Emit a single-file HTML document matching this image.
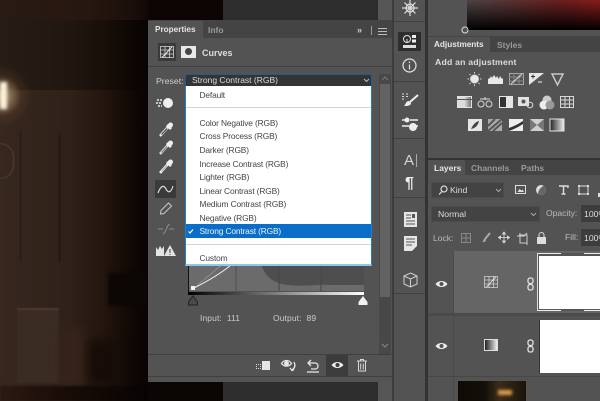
<!DOCTYPE html>
<html><head><meta charset="utf-8"><style>
html,body{margin:0;padding:0}
body{width:600px;height:401px;overflow:hidden;position:relative;background:#2e2e2e;font-family:"Liberation Sans",sans-serif;font-size:9px;color:#ddd}
div,span{position:absolute;white-space:nowrap;box-sizing:border-box}
svg{position:absolute;overflow:visible}
.t{line-height:12px;filter:blur(.3px)}
.m{left:199.500px;color:#444;font-size:8.4px;line-height:12px;letter-spacing:-.15px;filter:blur(.25px)}
</style></head><body>
<!-- photo -->
<div style="left:0;top:0;width:150px;height:401px;background:linear-gradient(90deg,#36271f 0,#302219 45%,#24170f 68%,#160c07 82%,#0c0603 92%,#080402 100%)"></div>
<div style="left:0;top:0;width:223px;height:20px;background:linear-gradient(90deg,#2a1a15,#26170f 40%,#1c100b 58%,#0d0605 70%,#0a0504)"></div>
<div style="left:0;top:20px;width:148px;height:70px;background:linear-gradient(90deg,rgba(14,7,4,.35),rgba(8,4,2,.45))"></div>
<div style="left:-30px;top:65px;width:62px;height:62px;background:radial-gradient(closest-side,rgba(255,220,170,.7),rgba(120,85,50,.22) 65%,transparent)"></div>
<div style="left:0;top:82px;width:7px;height:27px;background:#fbf2da;filter:blur(1.500px)"></div>
<div style="left:0;top:143px;width:14px;height:36px;border:1px solid #544438;border-left:0;border-radius:0 18px 18px 0;filter:blur(.5px)"></div>
<div style="left:20px;top:130px;width:1px;height:132px;background:#241811;filter:blur(.5px)"></div>
<div style="left:59px;top:135px;width:1px;height:127px;background:#1a100a;filter:blur(.5px)"></div>
<div style="left:17px;top:308px;width:42px;height:75px;background:#3a2c23;border-top:2px solid #4a392e;filter:blur(.6px)"></div>
<div style="left:60px;top:330px;width:25px;height:55px;background:#36241c;filter:blur(5px)"></div>
<div style="left:88px;top:340px;width:32px;height:45px;background:#170c07;filter:blur(5px)"></div>
<div style="left:108px;top:273px;width:40px;height:33px;background:#0c0605;filter:blur(1.500px)"></div>
<div style="left:0;top:386px;width:148px;height:15px;background:linear-gradient(90deg,#2a1911,#1a0d08 40%,#070303);filter:blur(1px)"></div>
<div style="left:148px;top:382px;width:75px;height:19px;background:#0b0504"></div>
<div style="left:148px;top:0;width:75px;height:20px;background:#0c0504"></div>
<div style="left:223px;top:0;width:155px;height:20px;background:#2d2d2d"></div>
<div style="left:378px;top:0;width:15px;height:401px;background:#565656"></div>

<!-- properties panel -->
<div style="left:148px;top:20px;width:244px;height:362px;background:#535353;border-top:1px solid #444"></div>
<div style="left:148px;top:21px;width:244px;height:17px;background:#444"></div>
<div style="left:148px;top:21px;width:55px;height:18px;background:#535353"></div>
<div class="t" style="left:155px;top:24px;color:#e4e4e4;font-weight:bold;font-size:8.2px">Properties</div>
<div class="t" style="left:208px;top:24px;color:#9a9a9a;font-weight:bold;font-size:8.5px">Info</div>
<div class="t" style="left:357px;top:24px;color:#ccc;font-weight:bold;font-size:9px">&#187;</div>
<div style="left:371px;top:26px;width:1px;height:9px;background:#999"></div>
<div style="left:378px;top:28px;width:9px;height:1px;background:#bbb;box-shadow:0 3px #bbb,0 6px #bbb"></div>
<div style="left:158px;top:43px;width:18px;height:18px;background:#3a3a3a"></div>
<svg style="left:160px;top:46px" width="14" height="12" fill="none" stroke="#cfcfcf" stroke-width=".8"><rect x=".5" y=".5" width="13" height="11"/><path d="M5 0v12M9.500 0v12M0 4h14M0 8h14"/><path d="M2 11C6 9 8 4 12 1" stroke="#eee" stroke-width="1"/></svg>
<div style="left:181px;top:46px;width:15px;height:12px;background:#e8e8e8"></div>
<div style="left:185px;top:48px;width:7px;height:7px;border-radius:50%;background:#444"></div>
<div class="t" style="left:202px;top:47px;color:#dedede;font-weight:bold;font-size:9px">Curves</div>
<div style="left:148px;top:66px;width:244px;height:1px;background:#404040"></div>
<div class="t" style="left:156px;top:75px;color:#cfcfcf;font-size:8.7px">Preset:</div>

<!-- left tools -->
<svg style="left:156px;top:96px" width="20" height="14"><circle cx="12" cy="7" r="5" fill="#eee"/><path d="M1 4h5M0 7h6M2 10h4" stroke="#eee" stroke-width="1.400" stroke-dasharray="2 1" fill="none"/></svg>
<svg style="left:159px;top:122px" width="15" height="15" fill="none"><path d="M1 14L9 5" stroke="#eee" stroke-width="2.500"/><path d="M2.500 12.500L8 6.500" stroke="#333" stroke-width="1"/><path d="M8 3l4 4" stroke="#eee" stroke-width="3"/><circle cx="11.500" cy="3" r="2.500" fill="#eee"/></svg>
<svg style="left:159px;top:140px" width="15" height="15" fill="none"><path d="M1 14L9 5" stroke="#ddd" stroke-width="2.500"/><path d="M2.500 12.500L8 6.500" stroke="#777" stroke-width="1"/><path d="M8 3l4 4" stroke="#eee" stroke-width="3"/><circle cx="11.500" cy="3" r="2.500" fill="#eee"/></svg>
<svg style="left:159px;top:159px" width="15" height="15" fill="none"><path d="M1 14L9 5" stroke="#eee" stroke-width="2.500"/><path d="M2.500 12.500L8 6.500" stroke="#aaa" stroke-width="1"/><path d="M8 3l4 4" stroke="#eee" stroke-width="3"/><circle cx="11.500" cy="3" r="2.500" fill="#eee"/></svg>
<div style="left:155px;top:180px;width:21px;height:18px;background:#3a3a3a"></div>
<svg style="left:157px;top:183px" width="17" height="12" fill="none"><path d="M1 10C4 2 7 2 9 6s5 4 7-3" stroke="#d8d8d8" stroke-width="1.200"/></svg>
<svg style="left:159px;top:201px" width="14" height="14" fill="none" stroke="#c8c8c8"><path d="M2 9.500L9.500 2l3 3L5 12.500 1.500 13z"/></svg>
<svg style="left:157px;top:222px" width="18" height="14" fill="none" stroke="#8c8c8c"><path d="M1 7h5M12 7h5M6 12C10 10 9 3 13 2"/></svg>
<svg style="left:156px;top:244px" width="20" height="13"><path d="M0 12V3l2 3 2-4 2 3 2-3v10z" fill="#e4e4e4"/><path d="M14 1l6 11H8z" fill="#e4e4e4"/><path d="M14 5v4M14 10v1" stroke="#444"/></svg>

<!-- curve graph -->
<div style="left:188px;top:258px;width:176px;height:33px;background:#6b6b6b"></div>
<svg style="left:188px;top:258px" width="176" height="33"><path d="M48 0V33M91 0V33M133 0V33" stroke="#4f4f4f" fill="none"/><path d="M73 6C78 22 90 26 100 27c15 2 30-1 42 0l34 0V0H73z" fill="#4e4e4e"/><path d="M91 0V33M133 0V33" stroke="#454545" fill="none"/><path d="M6 30L42 0" stroke="#8e8e8e" fill="none"/><path d="M6 30C18 24 32 16 43 7" stroke="#f0f0f0" fill="none" stroke-width="1"/><rect x="3" y="28" width="4" height="4" fill="#f2f2f2"/></svg>
<div style="left:188px;top:258px;width:1px;height:36px;background:#111"></div>
<div style="left:188px;top:292px;width:176px;height:3px;background:linear-gradient(90deg,#000,#fff)"></div>
<svg style="left:187px;top:295px" width="12" height="11"><path d="M6 1L10.500 7v3h-9V7z" fill="#4a4a4a" stroke="#222"/></svg>
<svg style="left:357px;top:295px" width="12" height="11"><path d="M6 1L10.500 7v3h-9V7z" fill="#f2f2f2"/></svg>
<div class="t" style="left:200px;top:312px;color:#cbcbcb;font-size:8.5px;word-spacing:2.500px;letter-spacing:.1px">Input: 111</div>
<div class="t" style="left:273px;top:312px;color:#cbcbcb;font-size:8.5px;word-spacing:2.500px;letter-spacing:.1px">Output: 89</div>

<!-- scrollbar -->
<div style="left:379px;top:74px;width:12px;height:280px;background:#484848"></div>
<div style="left:380px;top:84px;width:10px;height:213px;background:#626262"></div>
<svg style="left:381px;top:76px" width="8" height="5" fill="none" stroke="#777"><path d="M1 4l3-3 3 3"/></svg>
<svg style="left:381px;top:343px" width="8" height="5" fill="none" stroke="#888"><path d="M1 1l3 3 3-3"/></svg>

<!-- bottom toolbar -->
<div style="left:148px;top:354px;width:244px;height:1px;background:#3f3f3f"></div>
<div style="left:148px;top:376px;width:244px;height:1px;background:#3f3f3f"></div>
<div style="left:326px;top:355px;width:22px;height:21px;background:#3c3c3c"></div>
<div style="left:262px;top:361px;width:8px;height:9px;background:#e6e6e6"></div>
<div style="left:256px;top:364px;width:5px;height:5px;border:1px dotted #ddd"></div>
<svg style="left:280px;top:358px" width="18" height="15" fill="none" stroke="#e6e6e6" stroke-width="1.300"><path d="M1.500 5.500C4 1.500 9 1.500 11.500 5.500 9 9 4 9 1.500 5.500z"/><circle cx="6.500" cy="5.500" r="1.800" fill="#e6e6e6"/><path d="M14 4c1.500 3 1 6-2 8M10 10l2 2.500 2-1"/></svg>
<svg style="left:306px;top:359px" width="14" height="14" fill="none" stroke="#e6e6e6" stroke-width="1.300"><path d="M3 4h6c2 0 3 1.500 3 3s-1 3-3 3H5M5 1L2 4l3 3"/><path d="M1 13h12"/></svg>
<svg style="left:331px;top:360px" width="13" height="10"><path d="M.5 5C3.500 1 9.500 1 12.500 5 9.500 9 3.500 9 .5 5z" fill="#eee"/><circle cx="6.500" cy="5" r="2" fill="#3c3c3c"/></svg>
<svg style="left:357px;top:359px" width="11" height="13" fill="none" stroke="#d8d8d8"><path d="M0 2h10M3.500 2V.5h3V2M1.500 2.500v9.500h7V2.500M3.700 4.500v6M6.300 4.500v6"/></svg>

<!-- dropdown -->
<div style="left:185px;top:85px;width:187px;height:181px;background:#fff;border:1px solid #1f7fd0;border-top:0;border-bottom:2px solid #8fc8e8"></div>
<div style="left:185px;top:74px;width:187px;height:12px;background:#343434;border:1px solid #1d5c96;border-bottom:0"></div>
<div class="t" style="left:192px;top:74px;color:#ddd;font-size:8.5px">Strong Contrast (RGB)</div>
<svg style="left:363px;top:78px" width="7" height="5" fill="none" stroke="#bbb"><path d="M1 1l2.500 2.500L6 1"/></svg>
<div class="m" style="top:89px">Default</div>
<div style="left:186px;top:107px;width:185px;height:1px;background:#d4d4d4"></div>
<div class="m" style="top:117px">Color Negative (RGB)</div>
<div class="m" style="top:130px">Cross Process (RGB)</div>
<div class="m" style="top:144px">Darker (RGB)</div>
<div class="m" style="top:158px">Increase Contrast (RGB)</div>
<div class="m" style="top:171px">Lighter (RGB)</div>
<div class="m" style="top:185px">Linear Contrast (RGB)</div>
<div class="m" style="top:198px">Medium Contrast (RGB)</div>
<div class="m" style="top:212px">Negative (RGB)</div>
<div style="left:186px;top:224px;width:185px;height:14px;background:#0a6ec9"></div>
<div class="m" style="top:225px;color:#e8f2fb">Strong Contrast (RGB)</div>
<svg style="left:188px;top:229px" width="6" height="5" fill="none" stroke="#fff" stroke-width="1.200"><path d="M.5 2.500L2 4 5 .5"/></svg>
<div style="left:186px;top:244px;width:185px;height:1px;background:#d4d4d4"></div>
<div class="m" style="top:252px">Custom</div>

<!-- dock column -->
<div style="left:392px;top:0;width:2px;height:401px;background:#3c3c3c"></div>
<div style="left:394px;top:0;width:31px;height:401px;background:#535353"></div>
<div style="left:425px;top:0;width:3px;height:401px;background:#333"></div>
<div style="left:394px;top:21px;width:31px;height:1px;background:#3f3f3f"></div>
<div style="left:394px;top:81px;width:31px;height:1px;background:#3f3f3f"></div>
<div style="left:394px;top:138px;width:31px;height:1px;background:#3f3f3f"></div>
<div style="left:394px;top:197px;width:31px;height:1px;background:#3f3f3f"></div>
<div style="left:394px;top:293px;width:31px;height:1px;background:#3f3f3f"></div>
<svg style="left:402px;top:0" width="16" height="16" fill="none" stroke="#ddd" stroke-width="1.200"><circle cx="8" cy="8" r="4"/><path d="M8 0v16M0 8h16M2.500 2.500l11 11M13.500 2.500l-11 11"/></svg>
<div style="left:398px;top:32px;width:23px;height:19px;background:#2e2e2e"></div>
<svg style="left:402px;top:34px" width="15" height="15"><circle cx="5" cy="5" r="3.500" fill="none" stroke="#e4e4e4"/><path d="M5 5v4" stroke="#e4e4e4"/><rect x="10" y="1" width="4" height="3" fill="#eee"/><rect x="10" y="5.500" width="4" height="3" fill="#eee"/><rect x="1" y="11" width="13" height="3" fill="#ddd"/></svg>
<svg style="left:402px;top:58px" width="15" height="15" fill="none" stroke="#e2e2e2" stroke-width="1.200"><circle cx="7.500" cy="7.500" r="6.500"/><path d="M7.500 6.500v5M7.500 3.500v1.500"/></svg>
<svg style="left:401px;top:93px" width="18" height="14"><path d="M1 1h2M1 3.500h2M1 6h2M5 1h2M5 3.500h2" stroke="#ddd"/><path d="M17 2L9 9" stroke="#eee" stroke-width="2"/><path d="M8 8c-3 0-3 3-5 5 3 0 7 0 7-3z" fill="#eee"/></svg>
<svg style="left:401px;top:117px" width="18" height="16"><path d="M1 3h5M9 3h8M1 9h7M14 9h3" stroke="#eee" stroke-width="1.500"/><circle cx="6" cy="3" r="2.500" fill="#eee"/><circle cx="12" cy="10" r="4" fill="#eee"/></svg>
<div class="t" style="left:404px;top:153px;font-size:15px;line-height:15px;color:#d4d4d4">A</div>
<div style="left:416px;top:154px;width:1px;height:13px;background:#aaa"></div>
<div class="t" style="left:405px;top:176px;font-size:16px;line-height:15px;font-weight:bold;color:#eee">&#182;</div>
<svg style="left:404px;top:212px" width="13" height="15"><rect width="13" height="15" fill="#e6e6e6"/><path d="M2 3h5M2 6h5M2 9h9M2 12h9" stroke="#555"/><rect x="8" y="2" width="3" height="4" fill="#555"/></svg>
<svg style="left:404px;top:236px" width="13" height="15"><path d="M0 0h13v10l-5 5H0z" fill="#e6e6e6"/><path d="M2 3h9M2 6h9M2 9h6" stroke="#555"/></svg>
<svg style="left:403px;top:272px" width="15" height="16" fill="none" stroke="#cfcfcf"><path d="M7.500 1L14 4v8l-6.500 3L1 12V4zM1 4l6.500 3L14 4M7.500 7v8"/></svg>

<!-- right column -->
<div style="left:428px;top:0;width:172px;height:401px;background:#535353"></div>
<div style="left:467px;top:0;width:133px;height:30px;background:linear-gradient(180deg,rgba(0,0,0,0),#000),linear-gradient(90deg,#4c4444,#6a1f1f 70%,#8a1c1c)"></div>
<svg style="left:462px;top:25px" width="8" height="6" fill="none" stroke="#ddd"><circle cx="3" cy="5" r="3"/></svg>

<div style="left:428px;top:36px;width:172px;height:16px;background:#444"></div>
<div style="left:428px;top:37px;width:62px;height:15px;background:#535353"></div>
<div class="t" style="left:434px;top:39px;color:#e6e6e6;font-weight:bold;font-size:8.2px">Adjustments</div>
<div class="t" style="left:497px;top:39px;color:#999;font-weight:bold;font-size:8.5px">Styles</div>
<div class="t" style="left:435px;top:56px;color:#dcdcdc;font-weight:bold;font-size:8.7px;letter-spacing:.2px">Add an adjustment</div>
<!-- adjust icons row 1 -->
<svg style="left:467px;top:72px" width="100" height="15" fill="none" stroke="#d8d8d8"><circle cx="7.500" cy="7" r="4" fill="#e8e8e8"/><path d="M7.500 0v1.500M7.500 12.500V14M.5 7H2M13 7h1.500M2.500 2l1 1M11.500 11l1 1M12.500 2l-1 1M3.500 11l-1 1"/><path d="M21 12V7l2-1 1-2 1 2 2-3 2 3 1-2 2 3 1-3 2 3 1-1v6z" fill="#e8e8e8" stroke="none"/><rect x="42.500" y="1.500" width="14" height="11" stroke="#aaa"/><path d="M47 1v12M52 1v12M42 5h15M42 9h15" stroke="#888"/><path d="M44 12L55 2" stroke="#ddd"/><rect x="62" y="1" width="15" height="12" fill="#e6e6e6" stroke="none"/><path d="M62 13L77 1V13z" fill="#555" stroke="none"/><path d="M64 4.500h4M66 2.500v4" stroke="#333"/><path d="M71 10h4" stroke="#eee"/><path d="M85 2h11l-5.500 11z" stroke="#c8c8c8" stroke-width="1.500"/></svg>
<!-- row 2 -->
<div style="left:457px;top:96px;width:15px;height:12px;background:linear-gradient(90deg,#ddd 50%,#777);border:1px solid #e4e4e4"></div>
<div style="left:457px;top:99px;width:15px;height:1px;background:#555"></div>
<svg style="left:477px;top:96px" width="16" height="12" fill="none" stroke="#d8d8d8"><path d="M8 1v3M3 3h10"/><circle cx="4" cy="8" r="3"/><circle cx="12" cy="8" r="3"/></svg>
<div style="left:499px;top:96px;width:14px;height:12px;background:linear-gradient(90deg,#333 50%,#e6e6e6 50%);border:1px solid #e6e6e6"></div>
<svg style="left:518px;top:95px" width="16" height="14"><rect x="0" y="2" width="11" height="9" fill="#e2e2e2"/><circle cx="5.500" cy="6.500" r="2" fill="#555"/><circle cx="12" cy="10" r="2.800" fill="none" stroke="#d8d8d8"/></svg>
<svg style="left:539px;top:95px" width="16" height="15"><circle cx="8" cy="5" r="4.500" fill="#ccc"/><circle cx="5" cy="10" r="4.500" fill="#eee"/><circle cx="11" cy="10" r="4.500" fill="#999"/></svg>
<svg style="left:560px;top:96px" width="14" height="12" fill="none" stroke="#d8d8d8"><rect x=".5" y=".5" width="13" height="11"/><path d="M5 0v12M9.500 0v12M0 4h14M0 8h14"/></svg>
<!-- row 3 -->
<svg style="left:468px;top:119px" width="112" height="13"><rect width="14" height="12" fill="#e6e6e6"/><path d="M3 10C5 6 7 3 11 2 10 6 8 9 3 10z" fill="#444"/><rect x="20" width="14" height="12" fill="#aaa"/><path d="M20 12L34 0M25 12L34 4M20 7L27 0" stroke="#555" stroke-width="2"/><rect x="41" width="14" height="12" fill="#eee"/><path d="M41 9L46 7L50 5L55 2V5L50 8L46 10L41 12z" fill="#333"/><rect x="62" width="14" height="12" fill="#d0d0d0"/><path d="M62 0L69 6L76 0V12L69 6L62 12z" fill="#777"/><defs><linearGradient id="g"><stop offset="0" stop-color="#222"/><stop offset="1" stop-color="#eee"/></linearGradient></defs><rect x="82" width="14" height="12" fill="url(#g)" stroke="#e4e4e4"/></svg>

<!-- layers -->
<div style="left:428px;top:158px;width:172px;height:2px;background:#333"></div>
<div style="left:428px;top:160px;width:172px;height:15px;background:#444"></div>
<div style="left:428px;top:160px;width:37px;height:15px;background:#535353"></div>
<div class="t" style="left:434px;top:162px;color:#e6e6e6;font-weight:bold;font-size:8.5px">Layers</div>
<div class="t" style="left:471px;top:162px;color:#999;font-weight:bold;font-size:8.5px">Channels</div>
<div class="t" style="left:521px;top:162px;color:#999;font-weight:bold;font-size:8.5px">Paths</div>
<div style="left:431px;top:182px;width:73px;height:16px;background:#434343;border:1px solid #4b4b4b"></div>
<svg style="left:438px;top:185px" width="10" height="10" fill="none" stroke="#ddd" stroke-width="1.200"><circle cx="6" cy="4" r="3"/><path d="M4 6.500L1 9.500"/></svg>
<div class="t" style="left:450px;top:184px;color:#ddd;font-size:8.7px">Kind</div>
<svg style="left:495px;top:188px" width="7" height="5" fill="none" stroke="#aaa"><path d="M1 1l2.500 2.500L6 1"/></svg>
<svg style="left:515px;top:184px" width="85" height="13"><rect x=".5" y="1.500" width="10" height="8" fill="none" stroke="#ddd"/><path d="M2.500 8l2-3 2 1.500 1-1 1.500 2.500z" fill="#ddd"/><circle cx="26" cy="6" r="5" fill="#ddd"/><path d="M26 1a5 5 0 0 1 0 10 c-2-2 -2-8 0-10z" fill="#666" transform="rotate(35 26 6)"/><path d="M44 2h9v2M48.500 2v8M46.500 10h4" stroke="#ddd" stroke-width="1.400" fill="none"/><rect x="64" y="2" width="9" height="8" fill="none" stroke="#ddd"/><rect x="63" y="1" width="2" height="2" fill="#ddd"/><rect x="72" y="1" width="2" height="2" fill="#ddd"/><rect x="63" y="9" width="2" height="2" fill="#ddd"/><rect x="72" y="9" width="2" height="2" fill="#ddd"/><path d="M84 9v4" stroke="#ddd" stroke-width="2"/></svg>
<div style="left:431px;top:206px;width:109px;height:16px;background:#434343;border:1px solid #4b4b4b"></div>
<div class="t" style="left:438px;top:208px;color:#ddd;font-size:8.7px">Normal</div>
<svg style="left:530px;top:212px" width="7" height="5" fill="none" stroke="#aaa"><path d="M1 1l2.500 2.500L6 1"/></svg>
<div class="t" style="left:546px;top:207px;color:#bbb;font-size:8.5px">Opacity:</div>
<div style="left:581px;top:205px;width:19px;height:17px;background:#3d3d3d"></div>
<div class="t" style="left:584px;top:208px;color:#ddd;font-size:8.7px">100%</div>
<div class="t" style="left:433px;top:232px;color:#bbb;font-size:8.5px">Lock:</div>
<svg style="left:460px;top:232px" width="110" height="14"><rect x="1.500" y="1.500" width="9" height="9" fill="none" stroke="#888"/><path d="M1.500 6h9M6 1.500v9" stroke="#888"/><path d="M30 1L25 7" stroke="#aaa" stroke-width="2"/><path d="M25 6c-2 1-1 3-3 4 2 0 4 0 4-2z" fill="#aaa"/><path d="M44 0v11M38.500 5.500h11M44 0l-1.500 2h3zM44 11l-1.500-2h3zM38.500 5.500l2-1.500v3zM49.500 5.500l-2-1.500v3z" stroke="#ddd" fill="#ddd" stroke-width=".8"/><path d="M59 3h8v8h-7V1M57 4h8M67 1l-2 2M67 13v-2" stroke="#ccc" fill="none"/><rect x="77" y="5" width="9" height="7" fill="#ddd"/><path d="M79 5V3a2.500 2.500 0 0 1 5 0v2" stroke="#ddd" fill="none"/></svg>
<div class="t" style="left:565px;top:231px;color:#bbb;font-size:8.5px">Fill:</div>
<div style="left:581px;top:229px;width:19px;height:17px;background:#3d3d3d"></div>
<div class="t" style="left:584px;top:232px;color:#ddd;font-size:8.7px">100%</div>

<!-- layer rows -->
<div style="left:453px;top:251px;width:147px;height:62px;background:#656565"></div>
<div style="left:428px;top:313px;width:172px;height:3px;background:#4a4a4a"></div>
<div style="left:453px;top:251px;width:1px;height:150px;background:#4b4b4b"></div>
<div style="left:428px;top:376px;width:172px;height:1px;background:#474747"></div>
<svg style="left:435px;top:279px" width="13" height="10"><path d="M.5 5C3.500 1 9.500 1 12.500 5 9.500 9 3.500 9 .5 5z" fill="#eee"/><circle cx="6.500" cy="5" r="2" fill="#535353"/></svg>
<svg style="left:435px;top:341px" width="13" height="10"><path d="M.5 5C3.500 1 9.500 1 12.500 5 9.500 9 3.500 9 .5 5z" fill="#eee"/><circle cx="6.500" cy="5" r="2" fill="#535353"/></svg>
<svg style="left:484px;top:276px" width="14" height="12" fill="none" stroke="#ccc" stroke-width=".8"><rect x=".5" y=".5" width="13" height="11"/><path d="M5 0v12M9.500 0v12M0 4h14M0 8h14"/><path d="M2 11C6 9 8 4 12 1" stroke="#eee"/></svg>
<div style="left:484px;top:339px;width:14px;height:12px;background:linear-gradient(90deg,#222,#eee);border:1px solid #ddd"></div>
<svg style="left:527px;top:277px" width="8" height="14" fill="none" stroke="#e2e2e2" stroke-width="1.300"><rect x="1" y="1" width="5" height="5.500" rx="2"/><rect x="1" y="7.500" width="5" height="5.500" rx="2"/></svg>
<svg style="left:527px;top:339px" width="8" height="14" fill="none" stroke="#e2e2e2" stroke-width="1.300"><rect x="1" y="1" width="5" height="5.500" rx="2"/><rect x="1" y="7.500" width="5" height="5.500" rx="2"/></svg>
<div style="left:537px;top:253px;width:63px;height:58px;background:#555"></div>
<div style="left:537px;top:253px;width:24px;height:1px;background:#eee;box-shadow:47px 0 #eee"></div>
<div style="left:537px;top:310px;width:24px;height:1px;background:#eee;box-shadow:47px 0 #eee"></div>
<div style="left:537px;top:253px;width:1px;height:58px;background:#ddd"></div>
<div style="left:539px;top:256px;width:61px;height:53px;background:#fff"></div>
<div style="left:539px;top:320px;width:61px;height:53px;background:#fff;border-left:1px solid #333"></div>
<div style="left:458px;top:381px;width:68px;height:20px;background:linear-gradient(90deg,#0e0a07,#141009 40%,#3a2c18 60%,#1b140c)"></div>
<div style="left:498px;top:390px;width:14px;height:5px;background:#e0a050;filter:blur(1.500px)"></div>
</body></html>
